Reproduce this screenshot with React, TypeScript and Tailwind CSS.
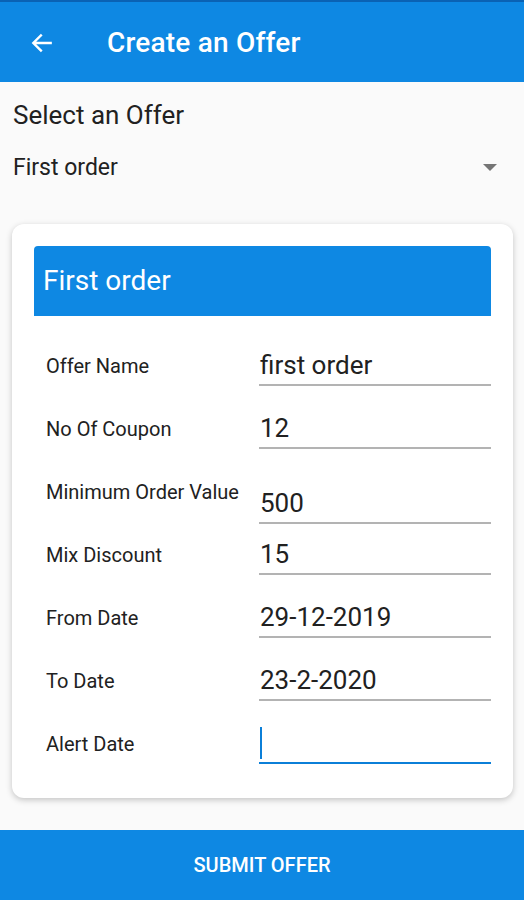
import React from "react";

const rows: { label: string; value: string; h: number; top?: boolean }[] = [
  { label: "Offer Name", value: "first order", h: 63 },
  { label: "No Of Coupon", value: "12", h: 63 },
  { label: "Minimum Order Value", value: "500", h: 75, top: true },
  { label: "Mix Discount", value: "15", h: 51 },
  { label: "From Date", value: "29-12-2019", h: 63 },
  { label: "To Date", value: "23-2-2020", h: 63 },
];

export default function App() {
  return (
    <div
      className="w-[524px] h-[900px] bg-[#fafafa] flex flex-col text-[#212121]"
      style={{ fontFamily: "Roboto, 'Noto Sans', sans-serif" }}
    >
      <div className="h-[82px] border-t-2 border-[#0a62b4] bg-[#0e88e3] flex items-center text-white pt-[2px]">
        <div className="w-[82px] flex items-center pl-[29px]">
          <svg width="26" height="26" viewBox="0 0 24 24" fill="none">
            <path d="M20 12H5M11 5l-7 7 7 7" stroke="white" strokeWidth="2.2" strokeLinecap="square" />
          </svg>
        </div>
        <div className="ml-[25px] text-[28px] font-medium leading-[34px] tracking-[0.2px]">Create an Offer</div>
      </div>

      <div className="px-[13px] mt-[16px] text-[26px] leading-[34px]">Select an Offer</div>
      <div className="mt-[21px] flex items-center justify-between pl-[13px] pr-[27px] text-[23px] leading-[30px]">
        <span>First order</span>
        <svg width="14" height="8" viewBox="0 0 14 8">
          <path d="M0 0h14L7 7z" fill="#757575" />
        </svg>
      </div>

      <div className="mt-[41px] ml-[12px] mr-[11px] bg-white rounded-[12px] shadow-[0_2px_6px_rgba(0,0,0,0.22)] px-[22px] pt-[22px] pb-[34px]">
        <div className="h-[70px] bg-[#0e88e3] rounded-t-[4px] flex items-center pl-[9px] text-white text-[28px]">
          First order
        </div>
        <div className="mt-[7px] flex flex-col">
          {rows.map((r) => (
            <div key={r.label} className="flex items-end" style={{ height: r.h }}>
              <div
                className={
                  "w-[225px] pl-[12px] text-[20px] leading-[26px] " +
                  (r.top ? "self-start mt-[30px]" : "pb-[7px]")
                }
              >
                {r.label}
              </div>
              <div className="flex-1 h-[40px] border-b-2 border-[#b3b3b3] pl-[1px] text-[26px] leading-[38px]">
                {r.value}
              </div>
            </div>
          ))}
          <div className="flex items-end h-[63px]">
            <div className="w-[225px] pl-[12px] text-[20px] leading-[26px] pb-[7px]">Alert Date</div>
            <div className="flex-1 h-[40px] border-b-2 border-[#0b7fd8] flex items-center pl-[1px]">
              <div className="w-[2px] h-[32px] bg-[#0b7fd8]" />
            </div>
          </div>
        </div>
      </div>

      <div className="mt-auto h-[70px] bg-[#0e88e3] flex items-center justify-center text-white text-[20px] font-medium">
        SUBMIT OFFER
      </div>
    </div>
  );
}
